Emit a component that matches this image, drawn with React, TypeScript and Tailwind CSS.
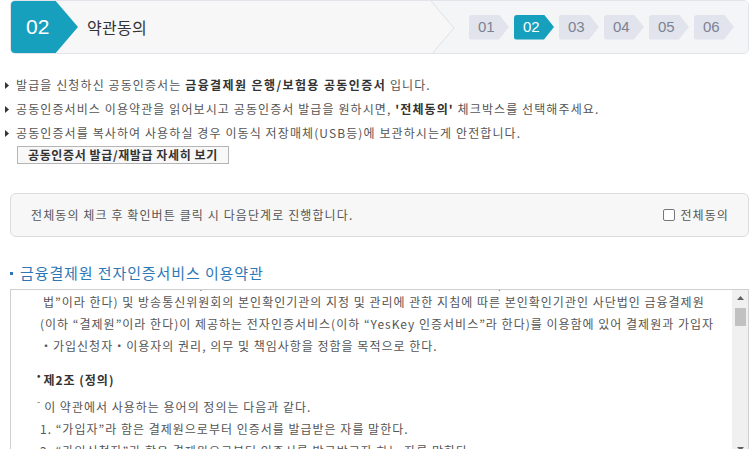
import { ReactNode } from "react";

const FONT = { fontFamily: '"Noto Sans CJK KR", "Liberation Sans", sans-serif' };

const STEPS = ["01", "02", "03", "04", "05", "06"];

function StepTab({ label, active }: { label: string; active: boolean }) {
  return (
    <div
      className={
        "flex h-[25px] w-[40px] items-center rounded-l-[3px] pl-[9px] text-[15px] [clip-path:polygon(0_0,75%_0,100%_50%,75%_100%,0_100%)] " +
        (active ? "bg-[#17a0bd] text-white" : "bg-[#e1e4ec] text-[#7c8292]")
      }
      style={{ fontFamily: '"Liberation Sans", Arial, sans-serif' }}
    >
      {label}
    </div>
  );
}

function Header() {
  return (
    <div className="flex h-[54px] items-stretch overflow-hidden rounded-[5px] border border-[#e2e4e9] bg-[#f7f7f8]">
      <div
        className="-my-px -ml-px flex w-[68px] items-center rounded-bl-[5px] bg-[#17a0bd] pl-[16px] text-[21px] text-white [clip-path:polygon(0_0,66%_0,100%_50%,66%_100%,0_100%)]"
        style={{ fontFamily: '"Liberation Sans", Arial, sans-serif' }}
      >
        02
      </div>
      <div className="ml-[9px] self-center text-[16px] tracking-[0.3px] text-[#333]">약관동의</div>
      <div className="flex-1" />
      <svg width="24" height="54" viewBox="0 0 24 54" className="shrink-0">
        <polygon points="0,0 24,0 24,54 0,54 23,27" fill="#f4f5f7" />
        <polyline points="0,0 23,27 0,54" fill="none" stroke="#dfe1e6" strokeWidth="1" />
      </svg>
      <div className="flex items-center gap-[5px] bg-[#f4f5f7] pl-[14px] pr-[14px]">
        {STEPS.map((s) => (
          <StepTab key={s} label={s} active={s === "02"} />
        ))}
      </div>
    </div>
  );
}

function Bullet({ children }: { children: ReactNode }) {
  return (
    <div className="flex h-[24px] items-center whitespace-nowrap">
      <svg width="4" height="7" viewBox="0 0 4 7" className="ml-[5px] mr-[7px] shrink-0">
        <polygon points="0,0 4,3.5 0,7" fill="#333" />
      </svg>
      <span>{children}</span>
    </div>
  );
}

function TermsBox() {
  return (
    <div className="relative mt-[6px] h-[170px] overflow-hidden border border-[#cfcfcf] bg-white">
      <div className="absolute right-0 top-0 bottom-0 z-10 flex w-[16px] flex-col items-center bg-[#f0f0f0]">
        <svg width="7" height="4" viewBox="0 0 7 4" className="mt-[6px]">
          <polygon points="0,4 3.5,0 7,4" fill="#606060" />
        </svg>
        <div className="mt-[8px] h-[18px] w-[11px] bg-[#c1c1c1]" />
        <div className="flex-1" />
        <svg width="7" height="4" viewBox="0 0 7 4" className="mb-[7px]">
          <polygon points="0,0 7,0 3.5,4" fill="#606060" />
        </svg>
      </div>
      <div className="-mt-[17px] pr-[20px] text-[12px] leading-[22px] tracking-[1px] text-[#555] whitespace-nowrap">
        <div className="pl-[38px]">
          - 이 약관은 「전자서명법」, 「정보통신망 이용촉진 및 정보보호 등에 관한 법률」(이하 “정보통신망
        </div>
        <div className="-mt-[4px] pl-[32px]">
          법”이라 한다) 및 방송통신위원회의 본인확인기관의 지정 및 관리에 관한 지침에 따른 본인확인기관인 사단법인 금융결제원
        </div>
        <div className="pl-[29px]">
          (이하 “결제원”이라 한다)이 제공하는 전자인증서비스(이하 “YesKey 인증서비스”라 한다)를 이용함에 있어 결제원과 가입자
        </div>
        <div className="pl-[29px]">・가입신청자・이용자의 권리, 의무 및 책임사항을 정함을 목적으로 한다.</div>
        <div className="mt-[12px] flex pl-[26px] font-semibold text-[#333]">
          <span className="mr-[2px] text-[9px] leading-[14px]">•</span>
          제2조 (정의)
        </div>
        <div className="mt-[5px] flex pl-[26px]">
          <span className="mr-[3px] text-[9px] leading-[12px]">-</span>이 약관에서 사용하는 용어의 정의는 다음과 같다.
        </div>
        <div className="pl-[29px]">1. “가입자”라 함은 결제원으로부터 인증서를 발급받은 자를 말한다.</div>
        <div className="pl-[29px]">2. “가입신청자”라 함은 결제원으로부터 인증서를 발급받고자 하는 자를 말한다.</div>
      </div>
    </div>
  );
}

export default function App() {
  return (
    <div className="h-[449px] w-[750px] overflow-hidden bg-white pl-[10px] pr-px" style={FONT}>
      <Header />

      <div className="-ml-[10px] mt-[19px] text-[12px] tracking-[1.1px] text-[#555]">
        <Bullet>
          발급을 신청하신 공동인증서는{" "}
          <b className="font-semibold tracking-[1.4px] text-[#333]">금융결제원 은행/보험용 공동인증서</b> 입니다.
        </Bullet>
        <Bullet>
          공동인증서비스 이용약관을 읽어보시고 공동인증서 발급을 원하시면,{" "}
          <b className="font-semibold text-[#333]">'전체동의'</b> 체크박스를 선택해주세요.
        </Bullet>
        <Bullet>공동인증서를 복사하여 사용하실 경우 이동식 저장매체(USB등)에 보관하시는게 안전합니다.</Bullet>
        <button className="ml-[17px] mt-px flex h-[18px] w-[212px] items-center justify-center border border-[#b5b5b5] bg-[#f8f8f8] text-[12px] font-semibold tracking-[0.6px] text-[#333]">
          공동인증서 발급/재발급 자세히 보기
        </button>
      </div>

      <div className="mt-[29px] flex h-[44px] items-center justify-between rounded-[6px] border border-[#dcdcdc] bg-[#f7f7f7] pl-[20px] pr-[19px] text-[12px] tracking-[1.1px] text-[#555]">
        <span>전체동의 체크 후 확인버튼 클릭 시 다음단계로 진행합니다.</span>
        <label className="flex items-center gap-[5px]">
          <span className="h-[12px] w-[12px] rounded-[2px] border border-[#777] bg-white" />
          전체동의
        </label>
      </div>

      <div className="mt-[26px] flex h-[20px] items-center text-[15px] tracking-[0.9px] text-[#2c77b6]">
        <span className="mr-[7px] h-[3px] w-[3px] bg-[#2c77b6]" />
        금융결제원 전자인증서비스 이용약관
      </div>

      <TermsBox />
    </div>
  );
}
